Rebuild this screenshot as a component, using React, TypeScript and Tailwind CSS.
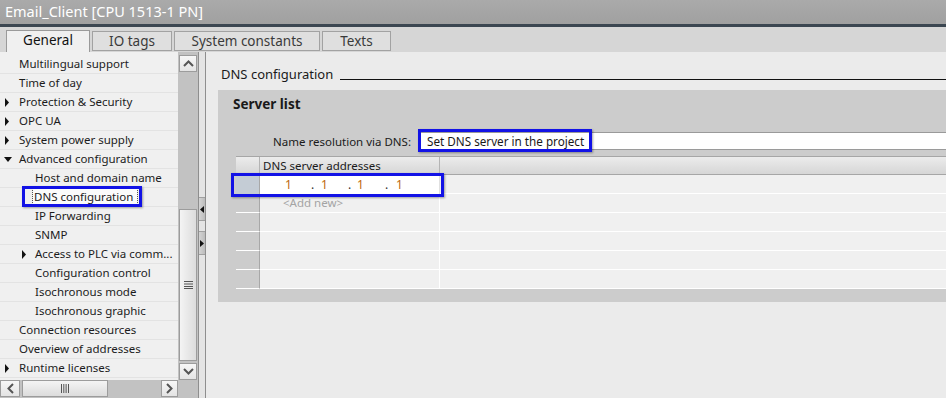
import React from 'react';

type TreeItem = {
  label: string;
  level: 1 | 2;
  arrow?: 'right' | 'down';
  selected?: boolean;
};

const items: TreeItem[] = [
  { label: 'Multilingual support', level: 1 },
  { label: 'Time of day', level: 1 },
  { label: 'Protection & Security', level: 1, arrow: 'right' },
  { label: 'OPC UA', level: 1, arrow: 'right' },
  { label: 'System power supply', level: 1, arrow: 'right' },
  { label: 'Advanced configuration', level: 1, arrow: 'down' },
  { label: 'Host and domain name', level: 2 },
  { label: 'DNS configuration', level: 2, selected: true },
  { label: 'IP Forwarding', level: 2 },
  { label: 'SNMP', level: 2 },
  { label: 'Access to PLC via comm...', level: 2, arrow: 'right' },
  { label: 'Configuration control', level: 2 },
  { label: 'Isochronous mode', level: 2 },
  { label: 'Isochronous graphic', level: 2 },
  { label: 'Connection resources', level: 1 },
  { label: 'Overview of addresses', level: 1 },
  { label: 'Runtime licenses', level: 1, arrow: 'right' },
];

function Arrow({ dir }: { dir: 'right' | 'down' }) {
  if (dir === 'down') {
    return (
      <svg width="9" height="9" viewBox="0 0 9 9">
        <polygon points="0,2 8,2 4,7" fill="#111" />
      </svg>
    );
  }
  return (
    <svg width="9" height="9" viewBox="0 0 9 9">
      <polygon points="1,0 5,4.5 1,9" fill="#111" />
    </svg>
  );
}

function TreeRow({ item }: { item: TreeItem }) {
  return (
    <div className="relative h-[19px] flex items-center border-b border-[#e3e3e3] whitespace-nowrap">
      <div className={item.level === 1 ? 'w-[19px] pl-[4px] flex' : 'w-[35px] pl-[21px] flex'}>
        {item.arrow && <Arrow dir={item.arrow} />}
      </div>
      {item.selected ? (
        <>
          <span className="-ml-[2px] pl-[1px] pr-[4px] bg-[#fbfbfb] outline-1 outline-dotted outline-[#555] text-[#1c1c1c]">
            {item.label}
          </span>
          <span className="absolute left-[22px] top-[-2px] w-[120px] h-[21px] border-[3px] border-[#1212e6] shadow-[1px_1px_2px_rgba(0,0,0,0.35)]"></span>
        </>
      ) : (
        <span className="text-[#1c1c1c]">{item.label}</span>
      )}
    </div>
  );
}

function ScrollButton({ children, className }: { children: React.ReactNode; className: string }) {
  return (
    <div className={`flex items-center justify-center border border-[#9c9c9c] bg-gradient-to-b from-[#f7f7f7] to-[#e4e4e4] ${className}`}>
      {children}
    </div>
  );
}

function IpAddress() {
  return (
    <div className="flex items-center h-full text-[12px]">
      <span className="ml-[25px] w-[26px] text-[#c06a10]">1</span>
      <span className="w-[10px] text-[#333]">.</span>
      <span className="w-[27px] text-[#c06a10]">1</span>
      <span className="w-[9px] text-[#333]">.</span>
      <span className="w-[28px] text-[#c06a10]">1</span>
      <span className="w-[11px] text-[#333]">.</span>
      <span className="text-[#c06a10]">1</span>
    </div>
  );
}

export default function App() {
  return (
    <div className="w-[946px] h-[398px] overflow-hidden flex flex-col bg-[#ebebeb] font-['Noto_Sans','Liberation_Sans',sans-serif]">
      {/* Title */}
      <div className="h-[24px] flex items-center pl-[5px] bg-gradient-to-b from-[#aaaaaa] to-[#a0a0a0] text-white text-[14.5px]">
        Email_Client [CPU 1513-1 PN]
      </div>
      <div className="h-[3px] bg-[#3b4651]"></div>

      {/* Tabs */}
      <div className="h-[25px] flex items-end pl-[6px] gap-[2px] bg-[#d6d6d6] text-[13.5px]">
        <div className="w-[84px] h-[22px] pb-[2px] flex items-center justify-center border border-b-0 border-[#9a9a9a] bg-[#f0f0f0] text-[#111]">
          General
        </div>
        <div className="w-[80px] h-[20px] mb-[1px] flex items-center justify-center border border-[#a2a2a2] bg-[#dfdfdf] text-[#3a3a3a]">
          IO tags
        </div>
        <div className="w-[146px] h-[20px] mb-[1px] flex items-center justify-center border border-[#a2a2a2] bg-[#dfdfdf] text-[#3a3a3a]">
          System constants
        </div>
        <div className="w-[69px] h-[20px] mb-[1px] flex items-center justify-center border border-[#a2a2a2] bg-[#dfdfdf] text-[#3a3a3a]">
          Texts
        </div>
      </div>

      <div className="flex-1 flex min-h-0">
        {/* Left panel */}
        <div className="w-[198px] flex flex-col">
          <div className="flex-1 flex min-h-0">
            <div className="w-[178px] pt-[3px] bg-[#f0f0f0] text-[11.5px] overflow-hidden">
              {items.map((it) => (
                <TreeRow key={it.label} item={it} />
              ))}
            </div>
            {/* vertical scrollbar */}
            <div className="w-[20px] flex flex-col bg-[#c2c2c2] pt-[3px] px-[1px]">
              <ScrollButton className="h-[17px]">
                <svg width="11" height="7" viewBox="0 0 11 7">
                  <polyline points="1,6 5.5,1.5 10,6" fill="none" stroke="#555" strokeWidth="2" />
                </svg>
              </ScrollButton>
              <div className="h-[137px]"></div>
              <div className="h-[152px] flex items-center justify-center border border-[#9c9c9c] bg-gradient-to-r from-[#f4f4f4] to-[#dcdcdc]">
                <svg width="9" height="8" viewBox="0 0 9 8">
                  <rect x="0" y="0" width="9" height="1" fill="#555" />
                  <rect x="0" y="2.5" width="9" height="1" fill="#555" />
                  <rect x="0" y="5" width="9" height="1" fill="#555" />
                  <rect x="0" y="7" width="9" height="1" fill="#555" />
                </svg>
              </div>
              <div className="h-[2px]"></div>
              <ScrollButton className="h-[17px]">
                <svg width="11" height="7" viewBox="0 0 11 7">
                  <polyline points="1,1 5.5,5.5 10,1" fill="none" stroke="#555" strokeWidth="2" />
                </svg>
              </ScrollButton>
            </div>
          </div>
          {/* horizontal scrollbar */}
          <div className="h-[18px] flex bg-[#c2c2c2]">
            <ScrollButton className="w-[20px] h-[17px]">
              <svg width="7" height="11" viewBox="0 0 7 11">
                <polyline points="6,1 1.5,5.5 6,10" fill="none" stroke="#555" strokeWidth="2" />
              </svg>
            </ScrollButton>
            <div className="w-[2px]"></div>
            <div className="w-[86px] h-[17px] flex items-center justify-center border border-[#9c9c9c] bg-gradient-to-b from-[#f4f4f4] to-[#dcdcdc]">
              <svg width="8" height="9" viewBox="0 0 8 9">
                <rect x="0" y="0" width="1" height="9" fill="#555" />
                <rect x="2.3" y="0" width="1" height="9" fill="#555" />
                <rect x="4.6" y="0" width="1" height="9" fill="#555" />
                <rect x="7" y="0" width="1" height="9" fill="#555" />
              </svg>
            </div>
            <div className="w-[53px]"></div>
            <ScrollButton className="w-[17px] h-[17px]">
              <svg width="7" height="11" viewBox="0 0 7 11">
                <polyline points="1,1 5.5,5.5 1,10" fill="none" stroke="#555" strokeWidth="2" />
              </svg>
            </ScrollButton>
          </div>
        </div>

        {/* Splitter */}
        <div className="w-[8px] flex flex-col border-x border-[#8e8e8e] bg-[#e4e4e4] pt-[145px]">
          <div className="h-[24px] flex items-center justify-center border-y border-[#a0a0a0] bg-gradient-to-r from-[#d4d4d4] to-[#bcbcbc]">
            <svg width="4" height="7" viewBox="0 0 4 7">
              <polygon points="4,0 0,3.5 4,7" fill="#111" />
            </svg>
          </div>
          <div className="h-[10px]"></div>
          <div className="h-[24px] flex items-center justify-center border-y border-[#a0a0a0] bg-gradient-to-r from-[#d4d4d4] to-[#bcbcbc]">
            <svg width="4" height="7" viewBox="0 0 4 7">
              <polygon points="0,0 4,3.5 0,7" fill="#111" />
            </svg>
          </div>
        </div>

        {/* Right panel */}
        <div className="flex-1 min-w-0 flex flex-col bg-[#ebebeb]">
          <div className="h-[38px] flex items-end pb-[7px] pl-[15px]">
            <span className="w-[119px] text-[13px] leading-[17px] text-[#1a1a1a]">DNS configuration</span>
            <div className="flex-1 h-px bg-[#111] mb-[3px]"></div>
          </div>

          <div className="ml-[12px] h-[212px] flex flex-col bg-[#cccccc]">
            <div className="h-[42px] pt-[4px] pl-[15px] text-[13.5px] font-bold text-[#1a1a1a]">Server list</div>

            <div className="flex h-[18px]">
              <div className="w-[200px] pr-[7px] text-right text-[11.5px] leading-[19px] text-[#1a1a1a]">Name resolution via DNS:</div>
              <div className="relative flex-1 bg-white border-y border-[#9a9a9a] pl-[9px] text-[11.7px] leading-[17px] text-[#1a1a1a]">
                Set DNS server in the project
                <span className="absolute left-0 top-[-4px] w-[174px] h-[23px] border-[3px] border-[#1212e6] shadow-[1px_1px_2px_rgba(0,0,0,0.35)]"></span>
              </div>
            </div>

            <div className="mt-[6px] ml-[18px] flex flex-col text-[11.5px]">
              {/* header */}
              <div className="h-[19px] flex border-y border-[#a6a6a6] bg-gradient-to-b from-[#ececec] to-[#d6d6d6]">
                <div className="w-[24px] border-r border-[#b4b4b4]"></div>
                <div className="w-[180px] pl-[3px] leading-[17px] border-r border-[#b4b4b4] text-[#1a1a1a]">DNS server addresses</div>
                <div className="flex-1"></div>
              </div>
              {/* first row */}
              <div className="relative h-[19px] flex">
                <div className="w-[24px] bg-[#c4ccd5] border-r border-[#a8a8a8]"></div>
                <div className="w-[180px] bg-white border-r border-[#e0e0e0]">
                  <IpAddress />
                </div>
                <div className="flex-1 bg-[#f0f0f0] border-b border-white"></div>
                <span className="absolute left-[-5px] top-[-2px] w-[213px] h-[24px] border-[3px] border-[#1212e6] shadow-[1px_1px_2px_rgba(0,0,0,0.35)]"></span>
              </div>
              {/* add new row */}
              <div className="h-[19px] flex">
                <div className="w-[24px] border-r border-[#a8a8a8] border-b border-b-white"></div>
                <div className="w-[180px] bg-[#f0f0f0] border-r border-white border-b border-b-white pl-[23px] leading-[18px] text-[#a4a4a4]">
                  &lt;Add new&gt;
                </div>
                <div className="flex-1 bg-[#f0f0f0] border-b border-white"></div>
              </div>
              {[0, 1, 2, 3].map((i) => (
                <div key={i} className="h-[19px] flex">
                  <div className="w-[24px] border-r border-[#a8a8a8] border-b border-b-white"></div>
                  <div className="w-[180px] bg-[#f0f0f0] border-r border-white border-b border-b-white"></div>
                  <div className="flex-1 bg-[#f0f0f0] border-b border-white"></div>
                </div>
              ))}
            </div>
          </div>
        </div>
      </div>
    </div>
  );
}
